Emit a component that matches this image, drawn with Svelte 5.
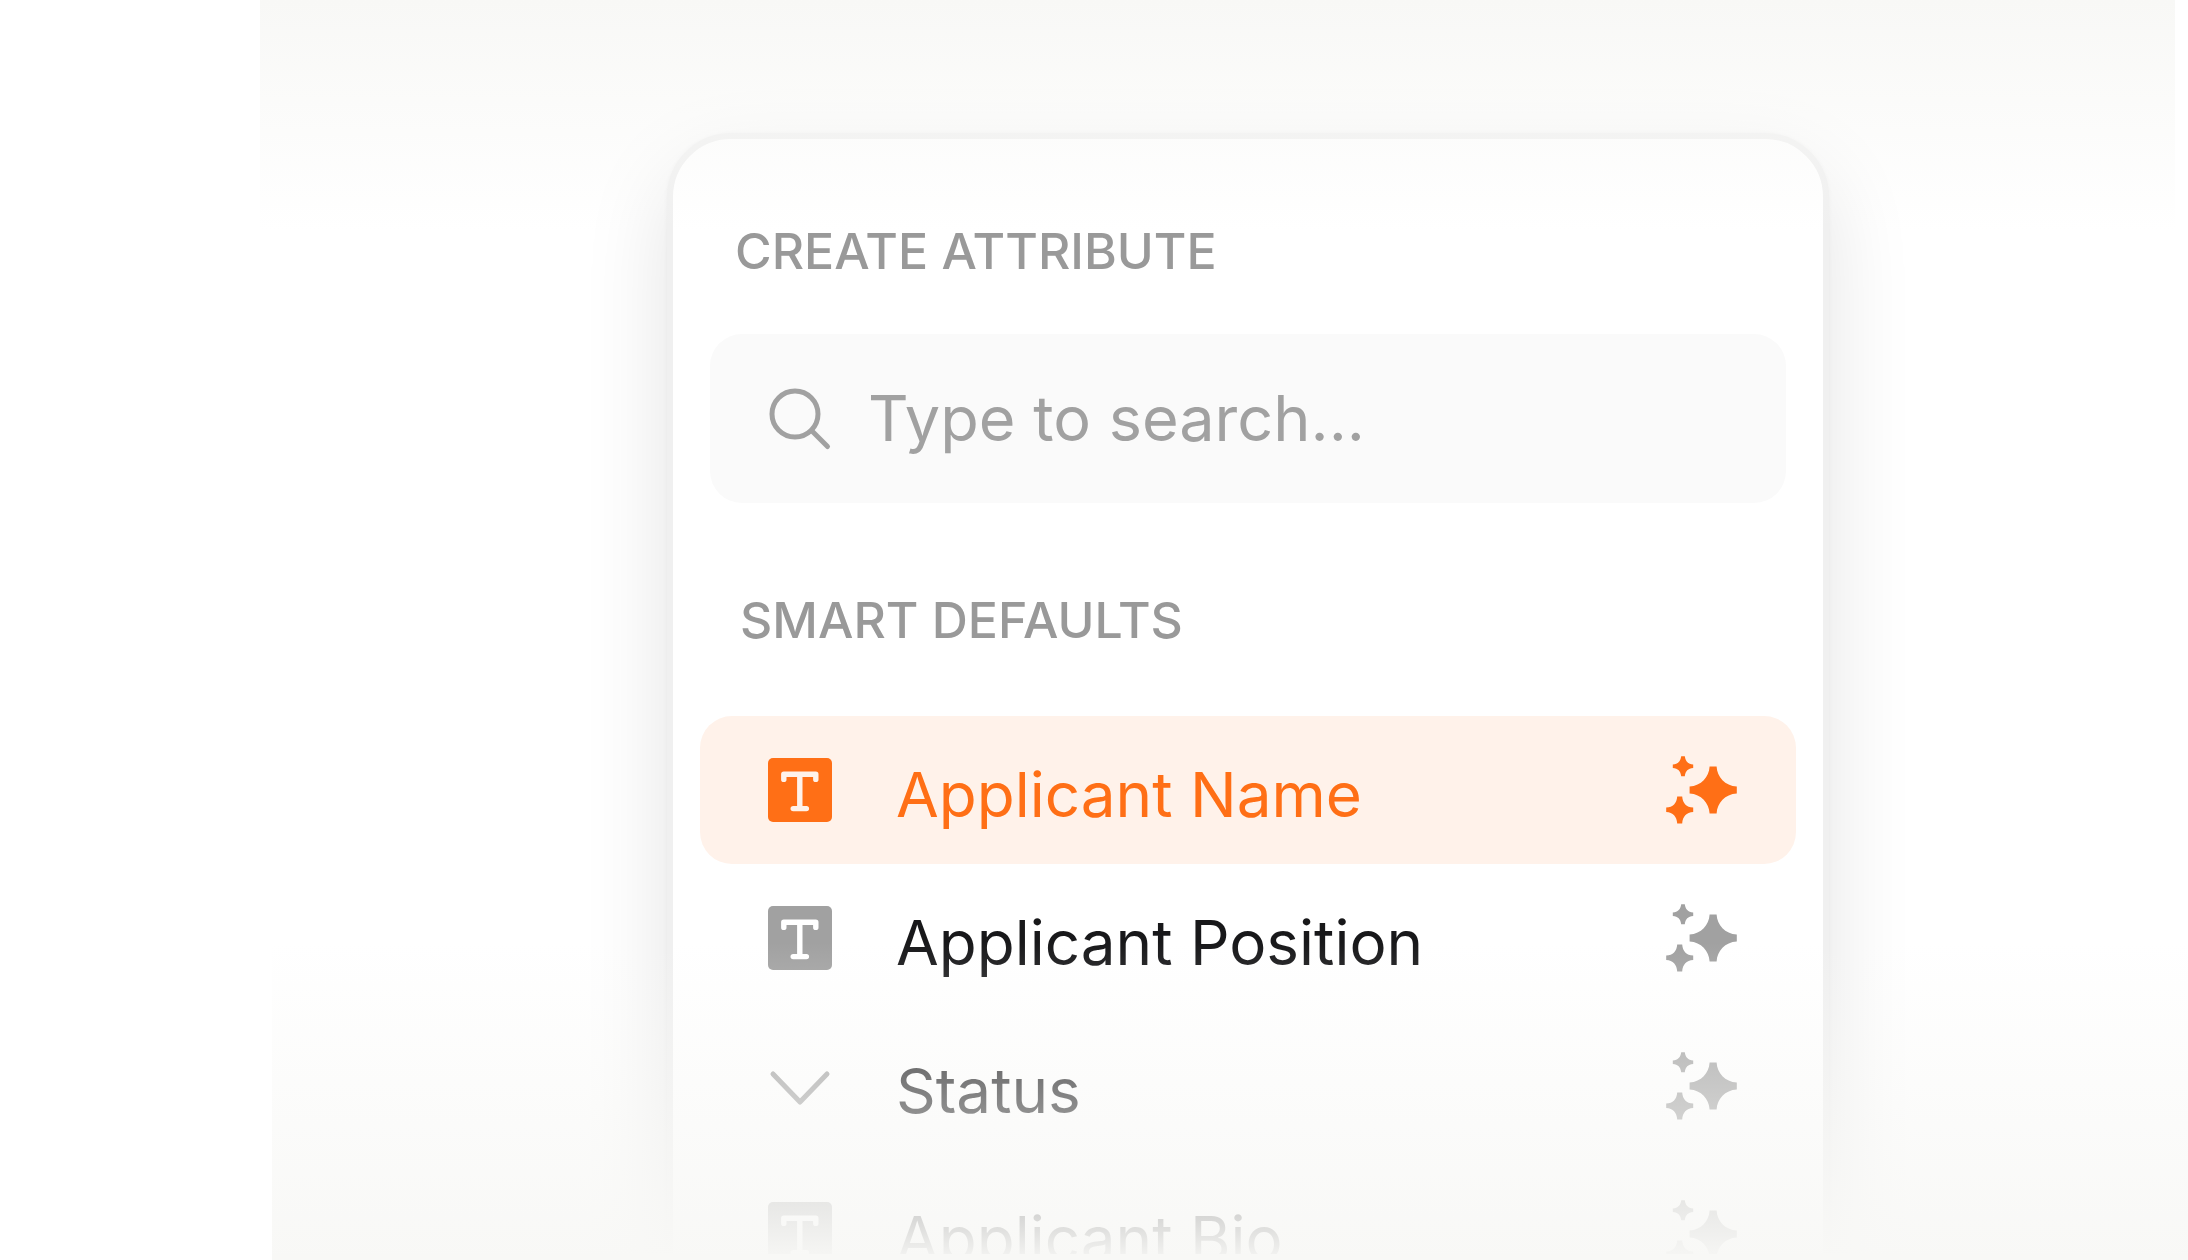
<script lang="ts">
  type Attribute = {
    id: string
    label: string
    kind: 'text' | 'select'
  }

  const attributes: Attribute[] = [
    { id: 'name', label: 'Applicant Name', kind: 'text' },
    { id: 'position', label: 'Applicant Position', kind: 'text' },
    { id: 'status', label: 'Status', kind: 'select' },
    { id: 'bio', label: 'Applicant Bio', kind: 'text' },
  ]

  let query = $state('')
  let activeId = $state('name')

  const visible = $derived(
    attributes.filter((a) => a.label.toLowerCase().includes(query.trim().toLowerCase()))
  )
</script>

<main class="page">
  <section class="panel">
    <h2 class="heading"><label for="attribute-search">CREATE ATTRIBUTE</label></h2>

    <div class="search">
      <svg class="icon" viewBox="0 0 64 64" aria-hidden="true">
        <g fill="none" stroke="currentColor" stroke-width="5" stroke-linecap="round">
          <circle cx="27" cy="27" r="23" />
          <path d="M43.5 43.5 L59.5 59.5" />
        </g>
      </svg>
      <input id="attribute-search" type="text" placeholder="Type to search..." bind:value={query} />
    </div>

    <h2 class="heading defaults">SMART DEFAULTS</h2>

    <ul class="list">
      {#each visible as attribute (attribute.id)}
        <li>
          <button
            type="button"
            class="row"
            class:active={attribute.id === activeId}
            onclick={() => (activeId = attribute.id)}
          >
            {#if attribute.kind === 'text'}
              <svg class="icon" viewBox="0 0 64 64" aria-hidden="true">
                <rect width="64" height="64" rx="5" fill="currentColor" />
                <path
                  class="letter"
                  d="M15.8 21.4 V16.2 H47.8 V21.4 M31.8 16.2 V50.6 M25.2 50.6 H38.4"
                  fill="none"
                  stroke-width="5.4"
                  stroke-linecap="round"
                  stroke-linejoin="round"
                />
              </svg>
            {:else}
              <svg class="icon" viewBox="0 0 64 64" aria-hidden="true">
                <path
                  d="M5 20 L32 48 L59 20"
                  fill="none"
                  stroke="currentColor"
                  stroke-width="5"
                  stroke-linecap="round"
                  stroke-linejoin="round"
                />
              </svg>
            {/if}
            <span class="label">{attribute.label}</span>
            <svg class="sparkle" viewBox="0 0 71 68" aria-hidden="true">
              <g fill="currentColor">
                <path d="M43.6 10.4 H50.6 C51.2 21 59 29.8 70.8 30.4 V37.4 C59 38 51.2 46.8 50.6 57.4 H43.6 C43 46.8 35.2 38 23.6 37.4 V30.4 C35.2 29.8 43 21 43.6 10.4 Z" />
                <path d="M15.2 0.2 H18.8 C19.4 5 22 8.2 27.2 8.5 V12.1 C22 12.4 19.4 15.4 18.8 20.2 H15.2 C14.6 15.4 12 12.4 6.8 12.1 V8.5 C12 8.2 14.6 5 15.2 0.2 Z" />
                <path d="M11.2 40.4 H16.2 C16.6 47 20.4 51.2 27.2 51.5 V56 C20.4 56.4 16.6 60.6 16.2 67.4 H11.2 C10.8 60.6 7 56.4 0.2 56 V51.5 C7 51.2 10.8 47 11.2 40.4 Z" />
              </g>
            </svg>
          </button>
        </li>
      {/each}
    </ul>
  </section>

  <div class="fade fade-top"></div>
  <div class="fade fade-bottom"></div>
</main>

<style>
  :global(body) {
    background: #fff;
  }

  .page {
    position: relative;
    display: grid;
    grid-template-columns: minmax(0, 667fr) minmax(0, 1162fr) minmax(0, 359fr);
    height: 100vh;
    padding-top: 133px;
    box-sizing: border-box;
    overflow: hidden;
    font-family: Inter, 'Liberation Sans', sans-serif;
  }

  .panel {
    grid-column: 2;
    align-self: start;
    box-sizing: border-box;
    padding: 80px 27px 60px;
    border: 6px solid #f0f0f0;
    border-radius: 64px;
    background: #fff;
    box-shadow:
      0 0 4px rgba(0, 0, 0, 0.04),
      0 32px 88px rgba(0, 0, 0, 0.11);
  }

  .heading {
    margin: 0;
    padding-left: 35px;
    color: #999;
    font-size: 50px;
    font-weight: 500;
    line-height: 64px;
    white-space: nowrap;
  }
  .heading.defaults {
    margin: 85px 0 64px;
    padding-left: 40px;
  }

  .search {
    display: flex;
    align-items: center;
    gap: 36px;
    height: 169px;
    margin: 51px 10px 0;
    padding: 0 58px;
    box-sizing: border-box;
    border-radius: 32px;
    background: #fafafa;
    color: #a1a1a1;
  }
  .search input {
    flex: 1;
    min-width: 0;
    height: 80px;
    padding: 0 0 2px;
    box-sizing: border-box;
    border: 0;
    outline: 0;
    background: none;
    color: #18181a;
    font: inherit;
    font-size: 63px;
  }
  .search input::placeholder {
    color: #a1a1a1;
    opacity: 1;
  }

  .list {
    margin: 0;
    padding: 0;
    list-style: none;
  }
  .row {
    display: flex;
    align-items: center;
    gap: 64px;
    width: 100%;
    height: 148px;
    padding: 0 59px 0 68px;
    border: 0;
    border-radius: 32px;
    background: none;
    color: #a1a1a1;
    font: inherit;
    font-size: 62px;
    text-align: left;
    cursor: pointer;
  }
  .row.active {
    background: #fff2ea;
    color: #ff6f16;
  }

  .icon {
    flex: none;
    width: 64px;
    height: 64px;
  }
  .letter {
    stroke: #fff;
  }
  .active .letter {
    stroke: #fff2ea;
  }

  .label {
    flex: 1;
    padding-top: 9px;
    color: #18181a;
    line-height: 80px;
    white-space: nowrap;
  }
  .active .label {
    color: inherit;
  }

  .sparkle {
    flex: none;
    width: 71px;
    height: 68px;
  }

  .fade {
    position: absolute;
    pointer-events: none;
  }
  .fade-top {
    top: 0;
    left: 260px;
    right: 13px;
    height: 232px;
    background: linear-gradient(#f8f8f6, rgba(248, 248, 247, 0));
  }
  .fade-bottom {
    bottom: 0;
    left: 272px;
    right: 0;
    height: 318px;
    background: linear-gradient(rgba(248, 248, 246, 0), rgba(248, 248, 246, 0.97) 312px, #f8f8f6 312px);
  }
</style>
